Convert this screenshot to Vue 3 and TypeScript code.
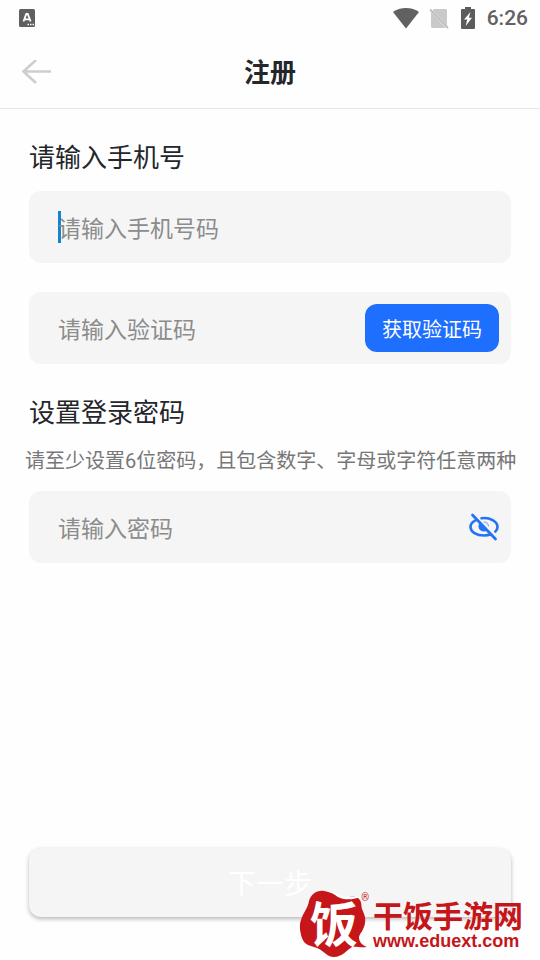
<script setup lang="ts">
import { ref } from 'vue'

const phone = ref('')
const code = ref('')
const password = ref('')
const passwordVisible = ref(false)
</script>

<template>
  <div class="page">
    <div class="status">
      <svg class="status-app" width="16" height="18" viewBox="0 0 16 18" aria-hidden="true">
        <rect width="16" height="18" rx="1.5" fill="#5f5f5f" />
        <path d="M4.500 12.500 7.300 5h1.500l2.800 7.500M5.600 10.300h4.900" fill="none" stroke="#fff" stroke-width="1.800" />
        <path d="M8.500 15.500h1.500M11 15.500h1.500M13.500 15.500h1.500" stroke="#fff" stroke-width="1.500" />
      </svg>
      <svg width="26" height="21" viewBox="0 0 26 21" aria-hidden="true">
        <path d="M13 20.500 0 4C3.700 1.300 8 0 13 0s9.300 1.300 13 4z" fill="#616161" />
      </svg>
      <svg width="20" height="21" viewBox="0 0 20 21" aria-hidden="true">
        <path d="M5 1h11.500q1.500 0 1.500 1.500V17.500L3.500 2.500zM2 4l15 16H3.500Q2 20 2 18.500z" fill="#c9c9c9" />
        <path d="m1 1.500 18 18.500" stroke="#bdbdbd" stroke-width="1.800" />
      </svg>
      <svg class="battery" width="14" height="22" viewBox="0 0 14 22" aria-hidden="true">
        <path d="M4 0h6v2h3q1 0 1 1v18q0 1-1 1H1q-1 0-1-1V3q0-1 1-1h3z" fill="#5c5c5c" />
        <path d="M9.500 5 3 12.500h3.200L4.700 19 11 10.700H7.800z" fill="#fff" />
      </svg>
      <span class="clock">6:26</span>
    </div>

    <header class="header">
      <button class="back" type="button" aria-label="返回">
        <svg width="30" height="24" viewBox="0 0 30 24" aria-hidden="true">
          <path d="M29 11.500H1.500M14 0 1.500 11.500 14 23" fill="none" stroke="#cecece" stroke-width="2.600" />
        </svg>
      </button>
      <h1 class="title">注册</h1>
    </header>

    <form class="form" @submit.prevent>
      <label class="label" for="phone">请输入手机号</label>
      <div class="field">
        <span class="caret"></span>
        <input id="phone" v-model="phone" class="input" type="tel" placeholder="请输入手机号码" />
      </div>
      <div class="field field-code">
        <input v-model="code" class="input" type="text" placeholder="请输入验证码" aria-label="验证码" />
        <button class="send" type="button">获取验证码</button>
      </div>

      <label class="label" for="password">设置登录密码</label>
      <p class="hint">请至少设置6位密码，且包含数字、字母或字符任意两种</p>
      <div class="field">
        <input
          id="password"
          v-model="password"
          class="input"
          :type="passwordVisible ? 'text' : 'password'"
          placeholder="请输入密码"
        />
        <button class="eye" type="button" aria-label="显示密码" @click="passwordVisible = !passwordVisible">
          <svg width="30" height="28" viewBox="0 0 30 28" fill="none" stroke="#2472f5" aria-hidden="true">
            <path
              d="M12.500 5.200C21 4 28.500 8.500 28.500 14c0 1.800-.8 3.300-2.200 4.700M6.800 7.200C3.300 9 1.500 11.300 1.500 14c0 4.800 6 8.500 13.500 8.500 2.600 0 5-.4 7-1.200"
              stroke-width="2.600"
              stroke-linecap="round"
            />
            <path d="M10.200 10.500c-2 4 .3 8 4.800 8 1.600 0 3-.5 4-1.400z" fill="#2472f5" stroke="none" />
            <path d="M14.500 9c2.800-.2 5 1.800 5 4.500" stroke="#83adf5" stroke-width="1.200" />
            <path d="m3.500 2 23 24" stroke-width="2.800" stroke-linecap="round" />
          </svg>
        </button>
      </div>

      <button class="next" type="submit">下一步</button>
    </form>

    <div class="brand">
      <svg class="seal" width="67" height="67" viewBox="0 0 67 67" aria-hidden="true">
        <path
          d="M9 11C11 4 17 0 24 1c7 1 12 5 19 6 6 1 10-2 15 1 4 3 3 7 4 11 2 5 4 8 3 14-1 7-5 10-6 14 0 5 3 8 8 10-7 1-11-1-15 0-5 3-10 10-18 10-7 0-11-7-17-9C11 56 4 55 2 48 0 42-1 35 1 30c2-7 7-12 8-19z"
          fill="#c5161a"
        />
        <path d="M33 3c6 7 17 8 27 4-7-1-13 1-20-2-2-1-4-2-7-2z" fill="#fff" />
        <text x="10" y="52" class="seal-text">饭</text>
      </svg>
      <span class="registered">®</span>
      <div class="brand-words">
        <span class="brand-name">干饭手游网</span>
        <span class="brand-url">www.eduext.com</span>
      </div>
    </div>
  </div>
</template>

<style>
body {
  margin: 0;
  background: #fefefe;
}
</style>

<style scoped>
.page {
  position: relative;
  display: flex;
  flex-direction: column;
  box-sizing: border-box;
  min-height: 100vh;
  background: #fefefe;
  color: #24262a;
  font-family: Roboto, "Noto Sans CJK SC", sans-serif;
}

button,
input {
  margin: 0;
  padding: 0;
  border: 0;
  background: none;
  font-family: inherit;
}

svg {
  display: block;
}

.status {
  display: flex;
  align-items: center;
  gap: 10px;
  height: 36px;
  padding: 0 12px 0 19px;
}

.status-app {
  margin-right: auto;
}

.battery {
  margin-left: 2px;
}

.clock {
  margin-left: 2px;
  color: #626262;
  font-size: 21px;
  font-weight: 500;
  line-height: 36px;
}

.header {
  display: grid;
  grid-template-columns: 1fr auto 1fr;
  align-items: center;
  height: 72px;
  padding: 0 22px;
  border-bottom: 1px solid #e6e6e6;
}

.back {
  justify-self: start;
}

.title {
  margin: 0;
  padding-top: 2px;
  font-size: 26px;
  font-weight: 700;
  line-height: 36px;
}

.form {
  display: flex;
  flex: 1;
  flex-direction: column;
  padding: 0 29px 43px;
}

.label {
  margin: 31px 0 15px;
  font-size: 26px;
  line-height: 36px;
}

.field {
  display: flex;
  align-items: center;
  height: 72px;
  padding: 0 12px 0 29px;
  border-radius: 12px;
  background: #f5f5f5;
}

.field-code {
  margin-top: 29px;
}

.caret {
  flex: none;
  width: 3px;
  height: 32px;
  margin-right: -3px;
  background: #1485d2;
}

.input {
  flex: 1;
  box-sizing: border-box;
  min-width: 0;
  height: 100%;
  padding-top: 4px;
  color: #24262a;
  font-size: 23px;
  outline: none;
}

.input::placeholder {
  color: #8c8c8c;
  opacity: 1;
}

.send {
  height: 48px;
  padding: 0 17px;
  border-radius: 12px;
  background: #1f6fff;
  color: #fff;
  font-size: 20px;
}

.hint {
  margin: 2px -4px 17px;
  color: #777;
  font-size: 20px;
  line-height: 26px;
  white-space: nowrap;
}

.next {
  height: 69px;
  margin-top: auto;
  padding-bottom: 2px;
  border-radius: 12px;
  background: #f5f5f5;
  box-shadow: 0 2px 4px rgba(0, 0, 0, 0.28);
  color: #fff;
  font-size: 28px;
}

.brand {
  position: absolute;
  right: 17px;
  bottom: 3px;
  display: flex;
  align-items: flex-start;
  color: #c5161a;
}

.seal {
  overflow: visible;
}

.seal-text {
  fill: #fff;
  font-family: "Noto Sans CJK SC", sans-serif;
  font-size: 48px;
  font-weight: 700;
}

.registered {
  margin-left: -6px;
  font-size: 10px;
  line-height: 16px;
}

.brand-words {
  display: flex;
  flex-direction: column;
  margin-left: 4px;
  padding-top: 8px;
}

.brand-name {
  font-family: "Noto Sans CJK SC", sans-serif;
  font-size: 30px;
  font-weight: 700;
  line-height: 32px;
}

.brand-url {
  font-family: "Liberation Sans", Arial, sans-serif;
  font-size: 18px;
  font-weight: 700;
  line-height: 22px;
}
</style>
